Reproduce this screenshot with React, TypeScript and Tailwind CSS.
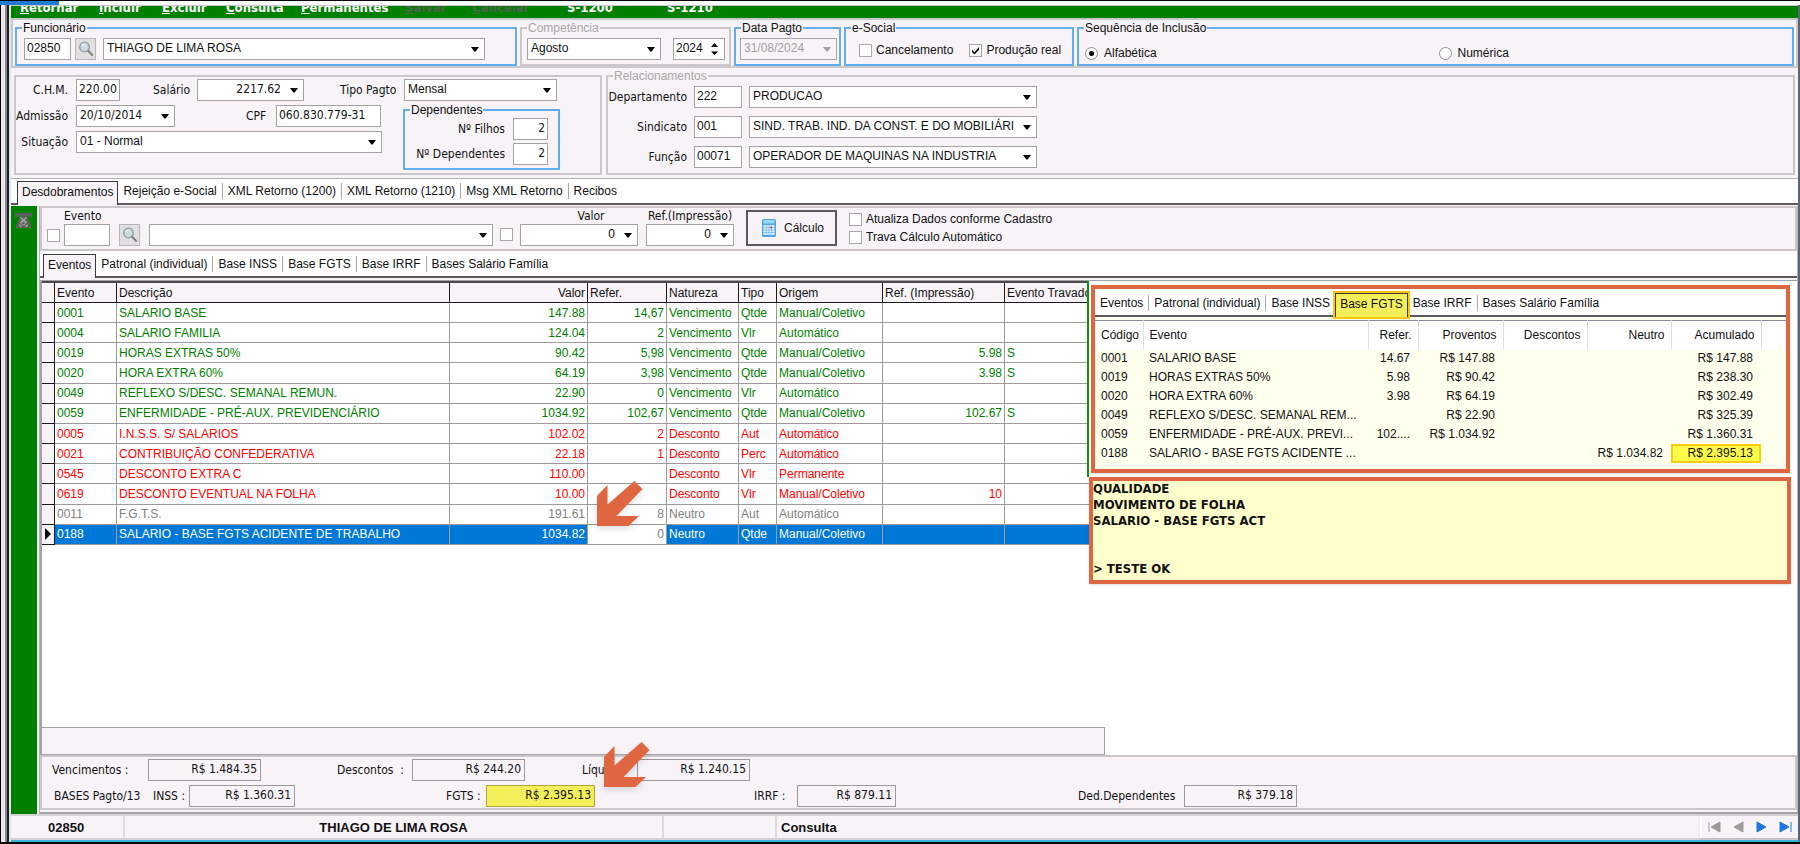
import { useState } from "react";
import type { ReactNode } from "react";

type Kind = "vencimento" | "desconto" | "neutro" | "selected";

interface EventRow {
  kind: Kind;
  code: string;
  description: string;
  value: string;
  refer: string;
  nature: string;
  type: string;
  origin: string;
  printRef?: string;
  locked?: string;
}

const menu = [
  { key: "R", rest: "etornar", className: "w-[79px]" },
  { key: "I", rest: "ncluir", className: "w-[63px]" },
  { key: "E", rest: "xcluir", className: "w-[64px]" },
  { key: "C", rest: "onsulta", className: "w-[75px]" },
  { key: "P", rest: "ermanentes", className: "w-[104px]" },
  { key: "S", rest: "alvar", className: "w-[67px]", disabled: true },
  { key: "C", rest: "ancelar", className: "w-[95px]", disabled: true },
  { key: "", rest: "S-1200", className: "w-[100px]" },
  { key: "", rest: "S-1210", className: "w-[100px]" },
];

const mainTabs = [
  "Desdobramentos",
  "Rejeição e-Social",
  "XML Retorno (1200)",
  "XML Retorno (1210)",
  "Msg XML Retorno",
  "Recibos",
];

const eventTabs = [
  "Eventos",
  "Patronal (individual)",
  "Base INSS",
  "Base FGTS",
  "Base IRRF",
  "Bases Salário Família",
];

const rows: EventRow[] = [
  { kind: "vencimento", code: "0001", description: "SALARIO BASE", value: "147.88", refer: "14,67", nature: "Vencimento", type: "Qtde", origin: "Manual/Coletivo" },
  { kind: "vencimento", code: "0004", description: "SALARIO FAMILIA", value: "124.04", refer: "2", nature: "Vencimento", type: "Vlr", origin: "Automático" },
  { kind: "vencimento", code: "0019", description: "HORAS EXTRAS 50%", value: "90.42", refer: "5,98", nature: "Vencimento", type: "Qtde", origin: "Manual/Coletivo", printRef: "5.98", locked: "S" },
  { kind: "vencimento", code: "0020", description: "HORA EXTRA 60%", value: "64.19", refer: "3,98", nature: "Vencimento", type: "Qtde", origin: "Manual/Coletivo", printRef: "3.98", locked: "S" },
  { kind: "vencimento", code: "0049", description: "REFLEXO S/DESC. SEMANAL REMUN.", value: "22.90", refer: "0", nature: "Vencimento", type: "Vlr", origin: "Automático" },
  { kind: "vencimento", code: "0059", description: "ENFERMIDADE - PRÉ-AUX. PREVIDENCIÁRIO", value: "1034.92", refer: "102,67", nature: "Vencimento", type: "Qtde", origin: "Manual/Coletivo", printRef: "102.67", locked: "S" },
  { kind: "desconto", code: "0005", description: "I.N.S.S. S/ SALARIOS", value: "102.02", refer: "2", nature: "Desconto", type: "Aut", origin: "Automático" },
  { kind: "desconto", code: "0021", description: "CONTRIBUIÇÃO CONFEDERATIVA", value: "22.18", refer: "1", nature: "Desconto", type: "Perc", origin: "Automático" },
  { kind: "desconto", code: "0545", description: "DESCONTO EXTRA C", value: "110.00", refer: "", nature: "Desconto", type: "Vlr", origin: "Permanente" },
  { kind: "desconto", code: "0619", description: "DESCONTO EVENTUAL NA FOLHA", value: "10.00", refer: "", nature: "Desconto", type: "Vlr", origin: "Manual/Coletivo", printRef: "10" },
  { kind: "neutro", code: "0011", description: "F.G.T.S.", value: "191.61", refer: "8", nature: "Neutro", type: "Aut", origin: "Automático" },
  { kind: "selected", code: "0188", description: "SALARIO - BASE FGTS ACIDENTE DE TRABALHO", value: "1034.82", refer: "0", nature: "Neutro", type: "Qtde", origin: "Manual/Coletivo" },
];

const fgtsRows = [
  ["0001", "SALARIO BASE", "14.67", "R$ 147.88", "", "", "R$ 147.88"],
  ["0019", "HORAS EXTRAS 50%", "5.98", "R$ 90.42", "", "", "R$ 238.30"],
  ["0020", "HORA EXTRA 60%", "3.98", "R$ 64.19", "", "", "R$ 302.49"],
  ["0049", "REFLEXO S/DESC. SEMANAL REM...", "", "R$ 22.90", "", "", "R$ 325.39"],
  ["0059", "ENFERMIDADE - PRÉ-AUX. PREVI...", "102....", "R$ 1.034.92", "", "", "R$ 1.360.31"],
  ["0188", "SALARIO - BASE FGTS ACIDENTE ...", "", "", "", "R$ 1.034.82", "R$ 2.395.13"],
];

const rowColor: Record<Kind, string> = {
  vencimento: "text-[#008000]",
  desconto: "text-[#ff0000]",
  neutro: "text-[#808080]",
  selected: "bg-[#0078d7] text-white",
};

const tahoma = "font-['DejaVu_Sans_Condensed','DejaVu_Sans',sans-serif]";

function TextBox({ id, label, value, className = "" }: { id?: string; label?: string; value: string; className?: string }) {
  return (
    <input
      id={id}
      aria-label={label}
      defaultValue={value}
      className={`h-[22px] shrink-0 border border-[#a4a2a4] bg-white px-[2px] pb-[2px] outline-none ${className}`}
    />
  );
}

function Combo({
  id,
  label,
  value,
  className = "",
  right = false,
  disabled = false,
}: {
  id?: string;
  label?: string;
  value: string;
  className?: string;
  right?: boolean;
  disabled?: boolean;
}) {
  return (
    <div className={`relative h-[22px] shrink-0 ${className}`}>
      <select
        id={id}
        aria-label={label}
        disabled={disabled}
        className={`h-full w-full appearance-none border border-[#a4a2a4] pb-[2px] pl-[3px] opacity-100 outline-none ${
          right ? "pr-[22px] [text-align-last:right]" : "pr-[19px]"
        } ${disabled ? "bg-[#f7f3f7] text-[#a0a0a0]" : "bg-white"}`}
      >
        <option>{value}</option>
      </select>
      <svg viewBox="0 0 8 5" className="pointer-events-none absolute top-[9px] right-[6px] h-[5px] w-2">
        <path d="M0 0h8L4.6 4.6h-1.200z" fill={disabled ? "#a0a0a0" : "#000"} />
      </svg>
    </div>
  );
}

function Group({
  title,
  muted = false,
  className = "",
  inner = "",
  children,
}: {
  title: string;
  muted?: boolean;
  className?: string;
  inner?: string;
  children: ReactNode;
}) {
  return (
    <fieldset className={`min-w-0 border-2 ${muted ? "border-[#cac6ca]" : "border-[#65aeec]"} ${className}`}>
      <legend className={`ml-[5px] px-px leading-4 ${muted ? "text-[#a8a6a8]" : ""}`}>{title}</legend>
      <div className={inner}>{children}</div>
    </fieldset>
  );
}

function Check({ label, checked = false }: { label: string; checked?: boolean }) {
  return (
    <label className="flex items-center gap-1">
      <span className="relative flex size-[13px]">
        <input
          type="checkbox"
          defaultChecked={checked}
          className="peer size-[13px] appearance-none border border-[#a8a6a8] bg-white"
        />
        <svg viewBox="0 0 13 13" className="pointer-events-none absolute inset-0 hidden peer-checked:block">
          <path d="M3 5.500l2.500 2.700L10 3v2.700L5.500 10.400 3 8z" fill="#000" />
        </svg>
      </span>
      {label}
    </label>
  );
}

function Radio({ label, checked = false }: { label: string; checked?: boolean }) {
  return (
    <label className="flex flex-1 items-center gap-[6px]">
      <span className="relative flex size-[13px]">
        <input
          type="radio"
          name="sequencia"
          defaultChecked={checked}
          className="peer size-[13px] appearance-none rounded-full border border-[#8e8c8e] bg-white"
        />
        <span className="pointer-events-none absolute top-1 left-1 hidden size-[5px] rounded-full bg-black peer-checked:block" />
      </span>
      {label}
    </label>
  );
}

function SearchButton({ label }: { label: string }) {
  return (
    <button type="button" aria-label={label} className="flex h-[22px] w-[21px] shrink-0 items-center justify-center border border-[#b8b6b8] bg-[#e1dfe1]">
      <svg viewBox="0 0 16 16" className="size-4">
        <circle cx="6.500" cy="6" r="4.800" fill="#c9dde3" stroke="#8b9a9f" strokeWidth="1.300" />
        <path d="M4 5.200a2.800 2.800 0 0 1 2.600-2" stroke="#fff" strokeWidth="1" fill="none" />
        <path d="M10.200 9.800l4 4.200" stroke="#7d8183" strokeWidth="2" strokeLinecap="round" />
      </svg>
    </button>
  );
}

function Tabs({ items, initial, className = "", activeClass = "" }: { items: string[]; initial: number; className?: string; activeClass?: string }) {
  const [active, setActive] = useState(initial);
  return (
    <div role="tablist" className={`flex items-end border-b-2 border-[#5c5a5c] bg-white ${className}`}>
      {items.map((item, i) => (
        <button
          key={item}
          type="button"
          role="tab"
          aria-selected={i === active}
          onClick={() => setActive(i)}
          className={
            i === active
              ? `-mb-[2px] h-6 border border-b-0 border-[#3c3a3c] px-1 pb-[3px] ${activeClass || "bg-[#f7f3f7]"}`
              : "flex h-[22px] items-center pb-[2px]"
          }
        >
          {i === active ? (
            item
          ) : (
            <span
              className={`block px-[5px] leading-4 ${
                i + 1 === active || i === items.length - 1 ? "" : "border-r border-[#a8a6a8]"
              }`}
            >
              {item}
            </span>
          )}
        </button>
      ))}
    </div>
  );
}

function Total({ id, label, value, labelClass, boxClass }: { id: string; label: string; value: string; labelClass: string; boxClass: string }) {
  return (
    <div className="flex items-center">
      <label htmlFor={id} className={`whitespace-pre ${labelClass}`}>
        {label}
      </label>
      <input
        id={id}
        readOnly
        value={value}
        className={`h-[22px] border pr-[3px] pb-[3px] text-right outline-none ${boxClass}`}
      />
    </div>
  );
}

function Arrow({ className = "" }: { className?: string }) {
  return (
    <svg viewBox="0 0 46 46" className={`pointer-events-none absolute size-[46px] drop-shadow-md ${className}`}>
      <path d="M0 45V15L10.500 4v19.500L37.500 0 45.500 8 19.500 35H42L31.500 45z" fill="#de6640" />
    </svg>
  );
}

function EventGrid() {
  const th = "border-r border-b border-[#1c1a1c] bg-[#f7f3f7] px-[2px] font-normal";
  const td = "border-r border-b border-[#9c9a9c] px-[2px]";
  return (
    <table className="h-[264px] w-[1063px] table-fixed border-separate border-spacing-0 border-t-2 border-[#4c4a4c] leading-4 whitespace-nowrap">
      <colgroup>
        <col className="w-[13px]" />
        <col className="w-[62px]" />
        <col className="w-[333px]" />
        <col className="w-[138px]" />
        <col className="w-[79px]" />
        <col className="w-[72px]" />
        <col className="w-[38px]" />
        <col className="w-[106px]" />
        <col className="w-[122px]" />
        <col />
      </colgroup>
      <thead>
        <tr className="h-[20px] text-left">
          <th className={th} aria-label="Linha atual" />
          <th className={th}>Evento</th>
          <th className={th}>Descrição</th>
          <th className={`${th} text-right`}>Valor</th>
          <th className={th}>Refer.</th>
          <th className={th}>Natureza</th>
          <th className={th}>Tipo</th>
          <th className={th}>Origem</th>
          <th className={th}>Ref. (Impressão)</th>
          <th className={th}>Evento Travado</th>
        </tr>
      </thead>
      <tbody>
        {rows.map((row) => {
          const selected = row.kind === "selected";
          return (
            <tr key={row.code} className={rowColor[row.kind]}>
              <td className="border-r border-b border-[#1c1a1c] bg-[#f7f3f7]">
                {selected && (
                  <svg viewBox="0 0 6 12" className="ml-[3px] h-3 w-[6px]">
                    <path d="M0 0l6 6-6 6z" fill="#000" />
                  </svg>
                )}
              </td>
              <td className={td}>{row.code}</td>
              <td className={td}>{row.description}</td>
              <td className={`${td} text-right`}>{row.value}</td>
              <td className={`${td} text-right ${selected ? "relative bg-white text-[#808080]" : ""}`}>
                {row.refer}
                {selected && <Arrow className="bottom-[17px] left-[9px]" />}
              </td>
              <td className={td}>{row.nature}</td>
              <td className={td}>{row.type}</td>
              <td className={td}>{row.origin}</td>
              <td className={`${td} text-right`}>{row.printRef}</td>
              <td className={td}>{row.locked}</td>
            </tr>
          );
        })}
      </tbody>
    </table>
  );
}

function FgtsPanel() {
  const th = "border-r border-[#e0dee0] bg-white px-[6px] font-normal";
  return (
    <section className="border-4 border-[#de6640] bg-[#ffffee] shadow">
      <Tabs
        items={eventTabs}
        initial={3}
        className="h-[28px]"
        activeClass="bg-[#f2ef5a] outline-2 outline-[#ffc40c]"
      />
      <table className="mt-[3px] w-full table-fixed border-t border-[#8c8a9c] leading-4 whitespace-nowrap">
        <colgroup>
          <col className="w-[48px]" />
          <col className="w-[225px]" />
          <col className="w-[50px]" />
          <col className="w-[85px]" />
          <col className="w-[84px]" />
          <col className="w-[84px]" />
          <col className="w-[90px]" />
          <col />
        </colgroup>
        <thead>
          <tr className="h-[28px] text-right">
            <th className={`${th} text-left`}>Código</th>
            <th className={`${th} text-left`}>Evento</th>
            <th className={th}>Refer.</th>
            <th className={th}>Proventos</th>
            <th className={th}>Descontos</th>
            <th className={th}>Neutro</th>
            <th className={th}>Acumulado</th>
            <th className="bg-white" aria-label="Extra" />
          </tr>
        </thead>
        <tbody>
          {fgtsRows.map((cells) => (
            <tr key={cells[0]} className="h-[19px]">
              {cells.map((cell, i) => (
                <td
                  key={i}
                  className={`${i < 2 ? "pl-[6px] text-left" : "pr-[8px] text-right"} ${
                    cells[0] === "0188" && i === 6 ? "bg-[#fffc4a] outline-2 -outline-offset-2 outline-[#ffcc14]" : ""
                  }`}
                >
                  {cell}
                </td>
              ))}
            </tr>
          ))}
        </tbody>
      </table>
      <div className="h-[6px]" />
    </section>
  );
}

function Header() {
  return (
    <div className="flex gap-[3px] border-2 border-[#cac6ca] px-[2px]">
      <Group title="Funcionário" className="w-[502px]" inner="flex items-center gap-1 pt-[2px] pb-[4px] pl-[7px]">
        <TextBox label="Código do funcionário" value="02850" className="w-[47px]" />
        <SearchButton label="Pesquisar funcionário" />
        <Combo label="Nome do funcionário" value="THIAGO DE LIMA ROSA" className="ml-[3px] w-[382px]" />
      </Group>
      <Group title="Competência" muted className="w-[211px]" inner="flex items-center gap-3 pt-[2px] pb-[4px] pl-[5px]">
        <Combo label="Mês" value="Agosto" className="w-[134px]" />
        <div className="relative">
          <TextBox label="Ano" value="2024" className="w-[52px]" />
          <svg viewBox="0 0 7 12" className="pointer-events-none absolute top-[5px] right-[7px] h-3 w-[7px]">
            <path d="M0 4l3.500-4L7 4zM0 8.500h7L3.500 12z" fill="#000" />
          </svg>
        </div>
      </Group>
      <Group title="Data Pagto" className="w-[107px]" inner="pt-[2px] pl-[4px]">
        <Combo label="Data de pagamento" value="31/08/2024" disabled className="w-[97px]" />
      </Group>
      <Group title="e-Social" className="w-[230px]" inner="flex items-center gap-4 pt-[5px] pl-[13px]">
        <Check label="Cancelamento" />
        <Check label="Produção real" checked />
      </Group>
      <Group title="Sequência de Inclusão" className="flex-1" inner="flex items-center pt-[8px] pl-[6px]">
        <Radio label="Alfabética" checked />
        <Radio label="Numérica" />
      </Group>
    </div>
  );
}

function EmployeeData() {
  const side = `${tahoma} w-[52px] text-right`;
  return (
    <div className="flex gap-1 px-[3px] pb-[3px]">
      <div className="mt-[7px] w-[588px] border-2 border-[#cac6ca]">
        <div className="mt-[2px] flex items-center">
          <label htmlFor="chm" className={side}>C.H.M.</label>
          <TextBox id="chm" value="220.00" className={`${tahoma} ml-2 w-[44px]`} />
          <label htmlFor="salario" className={`${tahoma} ml-[33px] w-[36px]`}>Salário</label>
          <Combo id="salario" value="2217.62" right className={`${tahoma} ml-2 w-[107px]`} />
          <label htmlFor="tipo" className={`${tahoma} ml-9 w-14 whitespace-nowrap`}>Tipo Pagto</label>
          <Combo id="tipo" value="Mensal" className="ml-2 w-[153px]" />
        </div>
        <div className="flex">
          <div className="mt-1 w-[387px] space-y-1">
            <div className="flex items-center">
              <label htmlFor="admissao" className={side}>Admissão</label>
              <Combo id="admissao" value="20/10/2014" className={`${tahoma} ml-2 w-[99px]`} />
              <label htmlFor="cpf" className={`${tahoma} ml-[71px] w-[22px]`}>CPF</label>
              <TextBox id="cpf" value="060.830.779-31" className={`${tahoma} ml-2 w-[105px]`} />
            </div>
            <div className="flex items-center">
              <label htmlFor="situacao" className={side}>Situação</label>
              <Combo id="situacao" value="01 - Normal" className="ml-2 w-[306px]" />
            </div>
          </div>
          <div className="pt-px">
            <Group title="Dependentes" className="w-[157px]" inner={`${tahoma} space-y-[3px] pr-[10px] pb-[3px]`}>
              <div className="flex items-center justify-end gap-2">
                <label htmlFor="filhos">Nº Filhos</label>
                <TextBox id="filhos" value="2" className="w-[35px] text-right" />
              </div>
              <div className="flex items-center justify-end gap-2">
                <label htmlFor="dependentes">Nº Dependentes</label>
                <TextBox id="dependentes" value="2" className="w-[35px] text-right" />
              </div>
            </Group>
          </div>
        </div>
      </div>
      <Group title="Relacionamentos" muted className="flex-1" inner="space-y-2 pt-[2px] pb-[5px]">
        {[
          ["Departamento", "222", "PRODUCAO"],
          ["Sindicato", "001", "SIND. TRAB. IND. DA CONST. E DO MOBILIÁRI"],
          ["Função", "00071", "OPERADOR DE MAQUINAS NA INDUSTRIA"],
        ].map(([label, code, name]) => (
          <div key={label} className="flex items-center">
            <label htmlFor={label} className={`${tahoma} w-[79px] text-right`}>{label}</label>
            <TextBox id={label} value={code} className="ml-[7px] w-12" />
            <Combo label={`${label} nome`} value={name} className="ml-[7px] w-[288px]" />
          </div>
        ))}
      </Group>
    </div>
  );
}

function EventForm() {
  return (
    <div className="flex items-end border-2 border-[#cac6ca] pb-[3px] pl-[5px]">
      <input type="checkbox" aria-label="Fixar evento" className="mb-1 size-[13px] appearance-none border border-[#a8a6a8] bg-white" />
      <div className="ml-1 flex flex-col">
        <label htmlFor="evento" className={`${tahoma} leading-4`}>Evento</label>
        <TextBox id="evento" value="" className="w-[46px]" />
      </div>
      <div className="ml-[9px]">
        <SearchButton label="Pesquisar evento" />
      </div>
      <Combo label="Descrição do evento" value="" className="ml-[9px] w-[344px]" />
      <input type="checkbox" aria-label="Fixar valor" className="mx-[7px] mb-[5px] size-[13px] appearance-none border border-[#a8a6a8] bg-white" />
      <div className="flex flex-col items-center">
        <label htmlFor="valor" className={`${tahoma} ml-6 leading-4`}>Valor</label>
        <Combo id="valor" value="0" right className="w-[118px]" />
      </div>
      <div className="ml-2 flex flex-col items-center">
        <label htmlFor="ref" className={`${tahoma} leading-4`}>Ref.(Impressão)</label>
        <Combo id="ref" value="0" right className="w-[88px]" />
      </div>
      <button type="button" className="ml-3 flex h-9 w-[91px] items-center gap-2 border-2 border-[#5a585a] pl-[14px]">
        <svg viewBox="0 0 14 18" className="h-[18px] w-[14px]">
          <rect width="14" height="18" rx="1.500" fill="#4aa6e4" />
          <rect x="1.500" y="1" width="11" height="3.500" fill="#9bd8fa" />
          <rect x="1.500" y="6" width="11" height="10" fill="#e4f2fb" />
          <path d="M4.300 6v10M7 6v10M9.700 6v10M1.500 8.500h11M1.500 11h11M1.500 13.500h11" stroke="#7ab8e4" strokeWidth=".8" />
          <path d="M8 8.500h2" stroke="#e33" strokeWidth="1.500" />
        </svg>
        Cálculo
      </button>
      <div className="ml-3">
        <Check label="Atualiza Dados conforme Cadastro" />
        <Check label="Trava Cálculo Automático" />
      </div>
    </div>
  );
}

function Totals() {
  const box = "border-[#9c9a9c]";
  return (
    <div className={`${tahoma} relative space-y-1 border-2 border-[#cac6ca] pt-[2px] pb-px pl-[10px]`}>
      <div className="flex">
        <Total id="vencimentos" label="Vencimentos :" value="R$ 1.484.35" labelClass="w-24" boxClass={`${box} w-[113px]`} />
        <div className="ml-[76px]">
          <Total id="descontos" label="Descontos  :" value="R$ 244.20" labelClass="w-[75px]" boxClass={`${box} w-[113px]`} />
        </div>
        <div className="relative ml-[57px]">
          <Total id="liquido" label="Líquido :" value="R$ 1.240.15" labelClass="w-[55px]" boxClass={`${box} w-[113px]`} />
          <Arrow className="-top-[17px] left-[22px]" />
        </div>
      </div>
      <div className="flex items-center">
        <span className="w-[101px] pl-[2px]">BASES Pagto/13</span>
        <Total id="inss" label="INSS :" value="R$ 1.360.31" labelClass="w-9" boxClass={`${box} w-[106px]`} />
        <div className="ml-[151px]">
          <Total id="fgts" label="FGTS :" value="R$ 2.395.13" labelClass="w-10" boxClass="w-[109px] border-[#b5a63a] bg-[#f2ef5a] outline-2 outline-[#f5c518]" />
        </div>
        <div className="ml-[159px]">
          <Total id="irrf" label="IRRF :" value="R$ 879.11" labelClass="w-[43px]" boxClass={`${box} w-[99px]`} />
        </div>
        <div className="ml-[182px]">
          <Total id="ded" label="Ded.Dependentes" value="R$ 379.18" labelClass="w-[106px]" boxClass={`${box} w-[113px]`} />
        </div>
      </div>
    </div>
  );
}

function StatusBar() {
  const nav = [
    { label: "Primeiro", path: "M1 1v10M12 1v10L3 6z", color: "#9b9b9b" },
    { label: "Anterior", path: "M11 1v10L2 6z", color: "#9b9b9b" },
    { label: "Próximo", path: "M2 1v10l9-5z", color: "#1c78e0" },
    { label: "Último", path: "M1 1v10l9-5zM12 1v10", color: "#1c78e0" },
  ];
  return (
    <footer className="flex h-[26px] items-stretch border-y-2 border-[#d4d2d4] text-[13px] leading-6 font-bold">
      <span className="w-[114px] border-r-2 border-[#dddbdd] pl-[37px]">02850</span>
      <span className="w-[539px] border-r-2 border-[#dddbdd] text-center">THIAGO DE LIMA ROSA</span>
      <span className="w-[113px] border-r-2 border-[#dddbdd]" />
      <span className="flex-1 pl-1">Consulta</span>
      <div className="flex w-[98px] items-center justify-between border-l-2 border-white px-[6px] shadow">
        {nav.map((item) => (
          <button key={item.label} type="button" aria-label={item.label}>
            <svg viewBox="0 0 13 12" className="h-3 w-[13px]">
              <path d={item.path} fill={item.color} stroke={item.color} strokeWidth="1" />
            </svg>
          </button>
        ))}
      </div>
    </footer>
  );
}

export default function App() {
  return (
    <div className="flex min-h-screen flex-col border-t border-b-2 border-black bg-white font-['Liberation_Sans',Arial,sans-serif] text-[12px] text-[#111]">
      <div className="h-1">
        <div className="h-1 w-[59px] bg-[#1f7bd0]" />
      </div>
      <div className="flex flex-1 border-l border-black">
        <div className="w-[6px] border-r-2 border-[#8a888a] bg-[#ece6ec]" />
        <div className="w-1 border-l-2 border-[#1e1e22] bg-[#d9e6f2]" />
        <main className="flex min-w-0 flex-1 flex-col border-r-2 border-b-2 border-r-[#5c6478] border-b-[#38b4d8] bg-[#f7f3f7]">
          <nav className={`${tahoma} flex h-[13px] items-end overflow-hidden border-t border-[#c8c6c8] bg-[#008000] pb-[2px] pl-[9px] text-[13px] leading-4 font-bold text-white`}>
            {menu.map((item) => (
              <button
                key={item.key + item.rest}
                type="button"
                disabled={item.disabled}
                className={`text-left ${item.className} ${item.disabled ? "text-[#4a664a]" : ""}`}
              >
                <span className="underline">{item.key}</span>
                {item.rest}
              </button>
            ))}
          </nav>
          <Header />
          <EmployeeData />
          <Tabs items={mainTabs} initial={0} className="h-[27px] border-t border-t-[#b4b2b4] pl-[6px]" />
          <div className="flex flex-1 pt-px">
            <aside className="w-[26px] bg-[#008000]">
              <svg viewBox="0 0 16 14" className="mt-[7px] ml-1 h-[15px] w-[17px]">
                <path d="M0 0h16v4h-3V3H3v1H0z" fill="#5c605c" />
                <path d="M4 3h8v2l3 6v3H1v-3l3-6z" fill="#5c605c" />
                <path d="M5 4l6 5M11 4L5 9M4 11l2 2M12 11l-2 2" stroke="#a9bba9" strokeWidth="1" />
                <circle cx="8" cy="9.500" r="1.800" fill="none" stroke="#a9bba9" strokeWidth=".8" />
              </svg>
            </aside>
            <div className="ml-[2px] flex min-w-0 flex-1 flex-col border-x border-[#b4b2b4]">
              <EventForm />
              <Tabs items={eventTabs} initial={0} className="h-[27px] pl-[3px]" />
              <div className="relative mt-[2px] flex min-h-[460px] flex-1 flex-col justify-between overflow-hidden border-t border-l-2 border-[#a4a2a4] bg-white">
                <EventGrid />
                <div className="h-[28px] w-[1063px] border border-l-0 border-[#a4a2a4] bg-[#f7f3f7]" />
                <div className="absolute top-0 right-0 w-[710px]">
                  <div className="border-l-2 border-[#109010] bg-white pt-1 pr-[7px] pl-[2px]">
                    <FgtsPanel />
                    <div className="h-1" />
                  </div>
                  <div className="mr-[6px] ml-[2px] h-[107px] border-4 border-[#de6640] bg-[#ffffcc] shadow">
                    <p className={`${tahoma} text-[13px] leading-4 font-bold whitespace-pre`}>
                      {"QUALIDADE\nMOVIMENTO DE FOLHA\nSALARIO - BASE FGTS ACT\n\n\n> TESTE OK"}
                    </p>
                  </div>
                </div>
              </div>
              <Totals />
              <div className="h-1 border-b-2 border-[#a4a2a4]" />
            </div>
          </div>
          <StatusBar />
        </main>
      </div>
    </div>
  );
}
